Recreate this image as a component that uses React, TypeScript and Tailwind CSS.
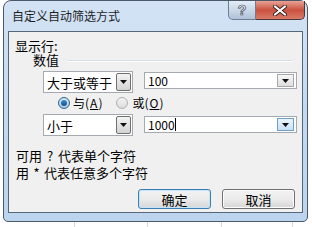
import React from "react";

function Arrow() {
  return (
    <svg width="7" height="4" viewBox="0 0 7 4">
      <path d="M0 0h7L3.5 4z" fill="#111" />
    </svg>
  );
}

function ListCombo({ text }: { text: string }) {
  return (
    <div className="w-[90px] h-[22px] bg-white border border-[#a5a9b0] flex items-center justify-between pl-[3px] pr-[1px]">
      <span className="text-[13px] leading-none">{text}</span>
      <div className="w-[15px] h-[18px] border border-[#707070] rounded-[2px] bg-gradient-to-b from-[#f3f3f3] to-[#d3d3d3] flex items-center justify-center">
        <Arrow />
      </div>
    </div>
  );
}

function EditCombo({ text, focused }: { text: string; focused?: boolean }) {
  return (
    <div className="w-[153px] h-[17px] bg-white border border-[#a5a9b0] flex items-center justify-between pl-[3px] pr-[2px]">
      <span className="text-[12px] leading-none flex items-center">
        {text}
        {focused && <span className="inline-block w-px h-[13px] bg-black" />}
      </span>
      <div
        className={
          focused
            ? "w-[17px] h-[13px] border border-[#6f9ec6] bg-gradient-to-b from-[#eaf4fc] to-[#c6e1f5] flex items-center justify-center"
            : "w-[17px] h-[13px] border border-[#a8a8a8] bg-gradient-to-b from-[#f7f7f7] to-[#dedede] flex items-center justify-center"
        }
      >
        <Arrow />
      </div>
    </div>
  );
}

function Radio({ checked }: { checked?: boolean }) {
  return (
    <div
      className={
        checked
          ? "w-[12px] h-[12px] rounded-full border border-[#2c628b] bg-gradient-to-b from-[#d6e8f7] to-[#a9cbe8] flex items-center justify-center"
          : "w-[12px] h-[12px] rounded-full border border-[#b0b0b0] bg-gradient-to-b from-[#f4f4f4] to-[#dcdcdc]"
      }
    >
      {checked && <div className="w-[6px] h-[6px] rounded-full bg-gradient-to-b from-[#3d8fd1] to-[#1b4f86]" />}
    </div>
  );
}

export default function App() {
  return (
    <div
      className="w-[312px] h-[227px] bg-white flex flex-col overflow-hidden text-black"
      style={{ fontFamily: '"Noto Sans CJK SC", "Noto Sans", sans-serif' }}
    >
      <div className="ml-[3px] w-[305px] h-[222px] shrink-0 rounded-t-[8px] rounded-b-[5px] border border-[#4a5868] bg-gradient-to-b from-[#d3e3f5] via-[#c4d9f0] to-[#bcd4ee] flex flex-col px-[4px] pb-[8px]">
        <div className="h-[30px] flex items-start justify-between">
          <span className="text-[12px] leading-none pt-[9px] pl-[4px] text-[#1e1e1e]">自定义自动筛选方式</span>
          <div className="flex -mr-[2px]">
            <div className="w-[28px] h-[19px] border border-[#6c7e95] border-t-0 rounded-bl-[5px] bg-gradient-to-b from-[#e4edf8] to-[#b0c2d8] flex items-center justify-center">
              <span className="text-[14px] font-bold leading-none text-white [-webkit-text-stroke:0.7px_#3a4656] font-['Liberation_Sans',sans-serif]">?</span>
            </div>
            <div className="w-[49px] h-[19px] border border-[#4c3734] border-t-0 border-l-0 rounded-br-[5px] bg-gradient-to-b from-[#e8a296] via-[#c9513f] to-[#d97a68] flex items-center justify-center">
              <svg width="14" height="11" viewBox="0 0 14 11">
                <path d="M2 1.5L12 9.5M12 1.5L2 9.5" stroke="#3a2422" strokeWidth="4" strokeLinecap="round" />
                <path d="M2 1.5L12 9.5M12 1.5L2 9.5" stroke="#fff" strokeWidth="2.2" strokeLinecap="round" />
              </svg>
            </div>
          </div>
        </div>

        <div className="flex-1 bg-[#f0f0f0] border border-[#56677c] flex flex-col text-[13px]">
          <div className="pl-[6px] pt-[7px] leading-[14px]">显示行:</div>
          <div className="flex items-center pl-[24px] leading-[14px]">
            <span>数值</span>
            <div className="flex-1 ml-[8px] mr-[9px] mt-[2px] border-t border-[#d5dfe5] border-b border-b-white" />
          </div>

          <div className="flex items-start gap-[11px] pl-[34px] mt-[4px]">
            <ListCombo text="大于或等于" />
            <div className="mt-[1px]">
              <EditCombo text="100" />
            </div>
          </div>

          <div className="flex items-center h-[12px] mt-[4px] pl-[49px]">
            <Radio checked />
            <span className="ml-[3px] text-[12px] leading-none">
              与<span className="tracking-[1px]">(<span className="underline">A</span>)</span>
            </span>
            <div className="ml-[13px]">
              <Radio />
            </div>
            <span className="ml-[4px] text-[12px] leading-none">
              或<span className="tracking-[1px]">(<span className="underline">O</span>)</span>
            </span>
          </div>

          <div className="flex items-start gap-[11px] pl-[34px] mt-[5px]">
            <ListCombo text="小于" />
            <div className="mt-[2px]">
              <EditCombo text="1000" focused />
            </div>
          </div>

          <div className="pl-[7px] mt-[11px] leading-[17px]">
            <div>
              可用<span className="inline-block w-[16px] text-center">?</span>代表单个字符
            </div>
            <div>
              用<span className="inline-block w-[15px] text-center">*</span>代表任意多个字符
            </div>
          </div>

          <div className="flex justify-end gap-[11px] mr-[7px] mt-[8px]">
            <button className="w-[73px] h-[20px] rounded-[3px] border border-[#3c7fb1] bg-gradient-to-b from-[#f2f2f2] via-[#ebebeb] to-[#d6d6d6] shadow-[inset_0_0_0_1px_#c5e4f8] text-[13px] leading-none">
              确定
            </button>
            <button className="w-[73px] h-[20px] rounded-[3px] border border-[#707070] bg-gradient-to-b from-[#f2f2f2] via-[#ebebeb] to-[#d6d6d6] shadow-[inset_0_0_0_1px_#fcfcfc] text-[13px] leading-none">
              取消
            </button>
          </div>
        </div>
      </div>
      <div className="flex h-[5px]">
        <div className="w-[75px] border-r border-[#d8d8d8]" />
        <div className="w-[73px] border-r border-[#d8d8d8]" />
        <div className="w-[74px] border-r border-[#d8d8d8]" />
        <div className="w-[71px] border-r border-[#d8d8d8]" />
      </div>
    </div>
  );
}
